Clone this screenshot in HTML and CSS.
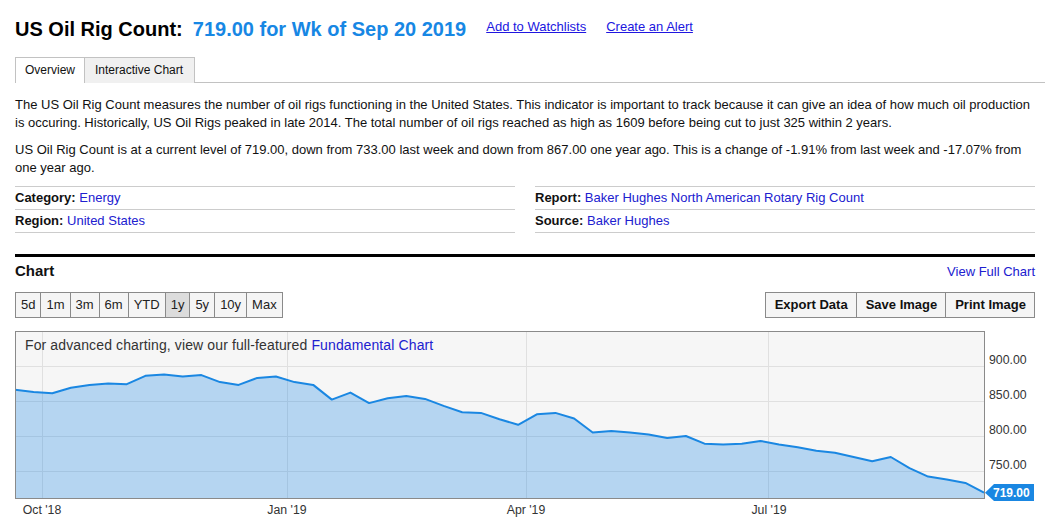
FILE: index.html
```html
<!DOCTYPE html>
<html lang="en">
<head>
<meta charset="utf-8">
<title>US Oil Rig Count</title>
<link rel="stylesheet" href="styles.css">
</head>
<body>
<div class="page">
  <div class="title-row">
    <h1 class="title">US Oil Rig Count:</h1>
    <span class="title-value">719.00 for Wk of Sep 20 2019</span>
    <a class="title-link first" href="#">Add to Watchlists</a>
    <a class="title-link" href="#">Create an Alert</a>
  </div>

  <div class="tabs">
    <div class="tab active">Overview</div>
    <div class="tab wide">Interactive Chart</div>
  </div>

  <p class="desc">The US Oil Rig Count measures the number of oil rigs functioning in the United States. This indicator is important to track because it can give an idea of how much oil production is occuring. Historically, US Oil Rigs peaked in late 2014. The total number of oil rigs reached as high as 1609 before being cut to just 325 within 2 years.</p>
  <p class="desc second">US Oil Rig Count is at a current level of 719.00, down from 733.00 last week and down from 867.00 one year ago. This is a change of -1.91% from last week and -17.07% from one year ago.</p>

  <div class="info">
    <div class="info-col">
      <div class="info-row"><b>Category:</b> <a href="#">Energy</a></div>
      <div class="info-row"><b>Region:</b> <a href="#">United States</a></div>
    </div>
    <div class="info-col">
      <div class="info-row"><b>Report:</b> <a href="#">Baker Hughes North American Rotary Rig Count</a></div>
      <div class="info-row"><b>Source:</b> <a href="#">Baker Hughes</a></div>
    </div>
  </div>

  <div class="chart-section">
    <div class="chart-head">
      <span class="chart-title">Chart</span>
      <a href="#" class="full-link">View Full Chart</a>
    </div>
    <div class="toolbar">
      <div class="ranges">
        <span class="btn">5d</span><span class="btn">1m</span><span class="btn">3m</span><span class="btn">6m</span><span class="btn">YTD</span><span class="btn selected">1y</span><span class="btn">5y</span><span class="btn">10y</span><span class="btn">Max</span>
      </div>
      <div class="actions">
        <span class="btn bold">Export Data</span><span class="btn bold">Save Image</span><span class="btn bold">Print Image</span>
      </div>
    </div>

    <div class="chart">
      <svg class="chart-svg" width="1030" height="192" viewBox="15 331 1030 192" xmlns="http://www.w3.org/2000/svg">
        <rect x="15.5" y="331.5" width="969" height="167" fill="#f6f6f6"/>
        <g stroke="#e0e0e0" stroke-width="1">
          <line x1="16" y1="366.5" x2="984" y2="366.5"/>
          <line x1="16" y1="401.5" x2="984" y2="401.5"/>
          <line x1="16" y1="436.5" x2="984" y2="436.5"/>
          <line x1="16" y1="471.5" x2="984" y2="471.5"/>
          <line x1="42.5" y1="332" x2="42.5" y2="498"/>
          <line x1="287.5" y1="332" x2="287.5" y2="498"/>
          <line x1="526.5" y1="332" x2="526.5" y2="498"/>
          <line x1="768.5" y1="332" x2="768.5" y2="498"/>
        </g>
        <polygon fill="#1e88e5" fill-opacity="0.3" points="15,389.8 33.6,391.9 52.3,393.3 70.9,387.7 89.5,384.9 108.2,383.5 126.8,384.2 145.4,375.8 164.1,374.4 182.7,376.5 201.4,375.1 220,382.1 238.6,384.9 257.3,377.9 275.9,376.5 294.5,382.1 313.2,384.9 331.8,399.6 350.4,392.6 369.1,403.1 387.7,398.2 406.3,396.1 425,398.9 443.6,405.9 462.2,412.2 480.9,412.9 499.5,419.2 518.1,424.8 536.8,414.3 555.4,412.9 574.1,418.5 592.7,432.5 611.3,431.1 630,432.5 648.6,434.6 667.2,438.1 685.9,436 704.5,443.7 723.1,444.4 741.8,443.7 760.4,440.9 779,444.4 797.7,447.2 816.3,450.7 834.9,452.8 853.6,457 872.2,461.2 890.8,457 909.5,468.2 928.1,476.6 946.8,479.4 965.4,482.9 984,492.7 984,498 15,498"/>
        <polyline fill="none" stroke="#1a87e2" stroke-width="2" stroke-linejoin="round" points="15,389.8 33.6,391.9 52.3,393.3 70.9,387.7 89.5,384.9 108.2,383.5 126.8,384.2 145.4,375.8 164.1,374.4 182.7,376.5 201.4,375.1 220,382.1 238.6,384.9 257.3,377.9 275.9,376.5 294.5,382.1 313.2,384.9 331.8,399.6 350.4,392.6 369.1,403.1 387.7,398.2 406.3,396.1 425,398.9 443.6,405.9 462.2,412.2 480.9,412.9 499.5,419.2 518.1,424.8 536.8,414.3 555.4,412.9 574.1,418.5 592.7,432.5 611.3,431.1 630,432.5 648.6,434.6 667.2,438.1 685.9,436 704.5,443.7 723.1,444.4 741.8,443.7 760.4,440.9 779,444.4 797.7,447.2 816.3,450.7 834.9,452.8 853.6,457 872.2,461.2 890.8,457 909.5,468.2 928.1,476.6 946.8,479.4 965.4,482.9 984,492.7"/>
        <rect x="15.5" y="331.5" width="969" height="167" fill="none" stroke="#8a8a8a" stroke-width="1"/>
        <g class="axis-text">
          <text x="989" y="363.5">900.00</text>
          <text x="989" y="398.5">850.00</text>
          <text x="989" y="433.5">800.00</text>
          <text x="989" y="468.5">750.00</text>
          <text x="42" y="513.5" text-anchor="middle">Oct '18</text>
          <text x="287" y="513.5" text-anchor="middle">Jan '19</text>
          <text x="526" y="513.5" text-anchor="middle">Apr '19</text>
          <text x="769" y="513.5" text-anchor="middle">Jul '19</text>
        </g>
        <polygon fill="#1a87e2" points="985,492.7 994,484 1034,484 1034,501 994,501"/>
        <text class="flag-text" x="993" y="497.3">719.00</text>
      </svg>
      <div class="chart-note">For advanced charting, view our full-featured <a href="#">Fundamental Chart</a></div>
    </div>
  </div>
</div>
</body>
</html>
```

FILE: styles.css
```css
* { box-sizing: border-box; }

body {
  margin: 0;
  font-family: "Liberation Sans", Arial, sans-serif;
  font-size: 13px;
  color: #111;
  background: #fff;
}

a { color: #2020cf; text-decoration: none; }

.page {
  padding: 18px 10px 0 15px;
}

.title-row {
  display: flex;
  align-items: baseline;
  height: 23px;
}

.title {
  margin: 0;
  font-size: 20px;
  line-height: 23px;
  font-weight: bold;
  color: #000;
}

.title-value {
  margin-left: 10px;
  font-size: 20px;
  line-height: 23px;
  font-weight: bold;
  color: #1787e4;
}

.title-link {
  align-self: flex-start;
  margin-top: 1px;
  font-size: 13px;
  line-height: 16px;
  text-decoration: underline;
  color: #2016e0;
  margin-left: 20px;
}
.title-link.first { margin-left: 20px; }

.tabs {
  display: flex;
  margin-top: 16px;
  margin-right: -10px;
  border-bottom: 1px solid #c2c2c2;
  height: 26px;
  font-size: 12px;
}

.tab {
  height: 26px;
  line-height: 24px;
  padding: 0 9px;
  border: 1px solid #c2c2c2;
  border-bottom: none;
  background: #f0f0f0;
  color: #111;
}
.tab + .tab { border-left: none; }
.tab.wide { padding: 0 11px 0 10px; }
.tab.active {
  background: #fff;
  position: relative;
  height: 26px;
  margin-bottom: -1px;
}

.desc {
  margin: 13px 0 0;
  line-height: 18px;
  color: #111;
}
.desc.second { margin-top: 9px; }

.info {
  display: grid;
  grid-template-columns: 500px 500px;
  column-gap: 20px;
  margin-top: 9px;
}

.info-col { border-top: 1px solid #ccc; }

.info-row {
  height: 23px;
  line-height: 22px;
  border-bottom: 1px solid #ccc;
}
.info-row b { color: #111; }

.chart-section {
  margin-top: 21px;
  border-top: 3px solid #000;
}

.chart-head {
  display: flex;
  justify-content: space-between;
  align-items: baseline;
  padding-top: 5px;
  height: 22px;
  line-height: 18px;
}

.chart-title {
  font-size: 15px;
  font-weight: bold;
  color: #111;
}

.full-link { font-size: 13px; }

.toolbar {
  display: flex;
  justify-content: space-between;
  align-items: center;
  margin-top: 13px;
}

.ranges, .actions { display: flex; }

.btn {
  display: block;
  height: 26px;
  line-height: 24px;
  padding: 0 5px;
  border: 1px solid #8a8a8a;
  background: #f5f5f5;
  font-size: 13px;
  color: #222;
}
.btn + .btn { border-left: none; }
.btn.selected { background: #dcdcdc; }
.btn.bold {
  font-weight: bold;
  padding: 0 8px 0 9px;
  color: #111;
}

.chart {
  position: relative;
  margin-top: 13px;
  margin-right: -10px;
  height: 192px;
}

.chart-svg { display: block; }

.axis-text text {
  font-family: "Liberation Sans", Arial, sans-serif;
  font-size: 12.3px;
  fill: #333;
}

.flag-text {
  font-family: "Liberation Sans", Arial, sans-serif;
  font-size: 12px;
  font-weight: bold;
  fill: #fff;
}

.chart-note {
  position: absolute;
  left: 10px;
  top: 6px;
  font-size: 14px;
  line-height: 16px;
  letter-spacing: 0.12px;
  color: #333;
}
```
